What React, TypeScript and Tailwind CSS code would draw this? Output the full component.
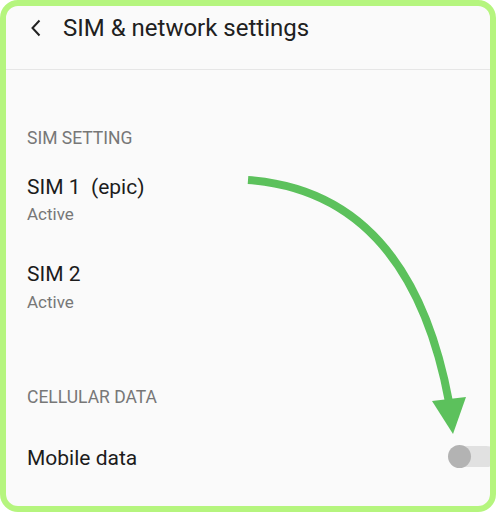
import React from 'react';

function Row({ title, sub, gap }: { title: string; sub: string; gap: string }) {
    return (
        <div className="flex flex-col">
            <span className="text-[21px] leading-[26px] text-[#1c1c1c]">{title}</span>
            <span className={`${gap} text-[17px] leading-[20px] text-[#777777]`}>{sub}</span>
        </div>
    );
}

export default function App() {
    return (
        <div className="relative w-[496px] h-[512px] overflow-hidden rounded-[18px] border-[6px] border-[#b5f57e] bg-[#fafafa]" style={{ fontFamily: 'Roboto, "Noto Sans", sans-serif' }}>
            <div className="h-[64px] pt-[8px] border-b border-[#e6e6e6] pl-[24px]">
                <div className="flex items-center h-[28px]">
                    <svg width="12" height="18" viewBox="0 0 12 18" className="shrink-0">
                        <path d="M9.5 1.5 L2.5 9 L9.5 16.5" fill="none" stroke="#222" strokeWidth="2" />
                    </svg>
                    <span className="ml-[21px] text-[24px] leading-[28px] text-[#202020]">SIM &amp; network settings</span>
                </div>
            </div>

            <div className="flex flex-col pl-[21px] pr-0">
                <span className="mt-[58px] text-[17.5px] leading-[20px] text-[#777777]">SIM SETTING</span>
                <div className="mt-[26px]">
                    <Row title={'SIM 1\u00a0\u00a0(epic)'} sub="Active" gap="mt-[4px]" />
                </div>
                <div className="mt-[37px]">
                    <Row title="SIM 2" sub="Active" gap="mt-[5px]" />
                </div>
                <span className="mt-[75px] text-[17.5px] leading-[20px] text-[#777777]">CELLULAR DATA</span>
                <div className="mt-[38px] flex items-center justify-between">
                    <span className="text-[21px] leading-[26px] text-[#1c1c1c]">Mobile data</span>
                    <div className="relative mr-[-7px] mt-[-3px] h-[21px] w-[46px] rounded-full bg-[#e1e1e1]">
                        <div className="absolute left-[-3px] top-[-1px] h-[23px] w-[23px] rounded-full bg-[#b3b3b3]" />
                    </div>
                </div>
            </div>

            {/* green arrow overlay */}
            <svg className="absolute left-[-6px] top-[-6px] pointer-events-none" width="496" height="512" viewBox="0 0 496 512">
                <path d="M248 180 Q410 192 449 402" fill="none" stroke="#5cc15c" strokeWidth="8" />
                <polygon points="432,401 466,397 453,434" fill="#5cc15c" />
            </svg>
        </div>
    );
}
